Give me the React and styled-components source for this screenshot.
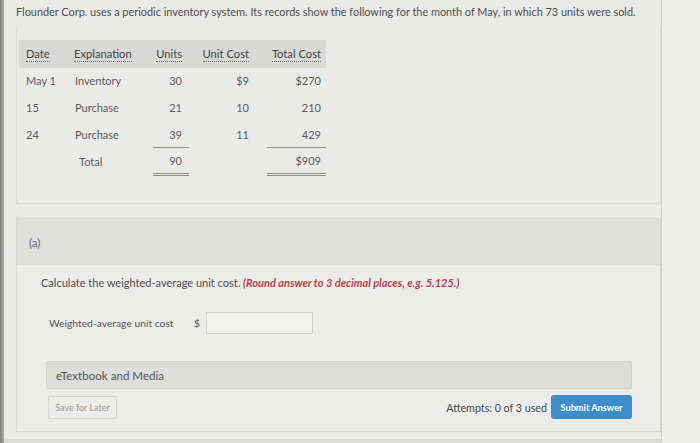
import React from 'react';
import styled, { createGlobalStyle } from 'styled-components';

const GlobalStyle = createGlobalStyle`
	html, body {
		margin: 0;
		padding: 0;
		background: #ececeb;
	}
	body {
		font-family: Lato, 'Open Sans', 'Liberation Sans', sans-serif;
		color: #555;
	}
`;

const rows = [
	{ date: 'May 1', text: 'Inventory', units: '30', cost: '$9', total: '$270' },
	{ date: '15', text: 'Purchase', units: '21', cost: '10', total: '210' },
	{ date: '24', text: 'Purchase', units: '39', cost: '11', total: '429', rule: 'single' },
	{ date: '', text: 'Total', units: '90', cost: '', total: '$909', rule: 'double', indent: true },
];

const App = () => {
	return (
		<Screen>
			<GlobalStyle />
			<Bezel />
			<Page>
				<Intro>
					Flounder Corp. uses a periodic inventory system. Its records show the following for
					the month of May, in which 73 units were sold.
				</Intro>
				<TableCard>
					<Grid>
						<Head>
							<HeadLabel>Date</HeadLabel>
						</Head>
						<Head>
							<HeadLabel>Explanation</HeadLabel>
						</Head>
						<Head $right $pad={7}>
							<HeadLabel>Units</HeadLabel>
						</Head>
						<Head $right $pad={10}>
							<HeadLabel>Unit Cost</HeadLabel>
						</Head>
						<Head $right $pad={5}>
							<HeadLabel>Total Cost</HeadLabel>
						</Head>
						{rows.map((r, i) => (
							<React.Fragment key={i}>
								<Cell $padLeft={7}>{r.date}</Cell>
								<Cell $padLeft={r.indent ? 8 : 4}>{r.text}</Cell>
								<Cell $right $pad={7} $rule={r.rule}>
									{r.units}
								</Cell>
								<Cell $right $pad={10}>
									{r.cost}
								</Cell>
								<Cell $right $pad={5} $gap={8} $rule={r.rule}>
									{r.total}
								</Cell>
							</React.Fragment>
						))}
					</Grid>
				</TableCard>
				<PartCard>
					<PartHeader>(a)</PartHeader>
					<PartBody>
						<Question>
							Calculate the weighted-average unit cost.{' '}
							<Hint>(Round answer to 3 decimal places, e.g. 5.125.)</Hint>
						</Question>
						<AnswerRow>
							<AnswerLabel>Weighted-average unit cost</AnswerLabel>
							<Dollar>$</Dollar>
							<AnswerInput type="text" />
						</AnswerRow>
						<MediaBar>eTextbook and Media</MediaBar>
						<Footer>
							<SaveButton>Save for Later</SaveButton>
							<Attempts>Attempts: 0 of 3 used</Attempts>
							<SubmitButton>Submit Answer</SubmitButton>
						</Footer>
					</PartBody>
				</PartCard>
			</Page>
			<Outside />
		</Screen>
	);
};

const Screen = styled.div`
	display: flex;
	height: 443px;
	overflow: hidden;
`;

const Bezel = styled.div`
	width: 4px;
	background: linear-gradient(90deg, #7e7e7e, #a9a9a8);
`;

const Page = styled.div`
	width: 658px;
	box-sizing: border-box;
	padding: 5px 0 0 12px;
	background: #e9e9e7;
	border-right: 1px solid #d2d2d0;
	border-bottom: 4px solid #dcdcda;
	height: 443px;
`;

const Outside = styled.div`
	flex: 1;
	background: #eeeeed;
`;

const Intro = styled.p`
	margin: 0;
	font-size: 10.9px;
	line-height: 14px;
	color: #4e4e4e;
	white-space: nowrap;
`;

const TableCard = styled.div`
	margin-top: 9px;
	padding: 12px 0 28px 2px;
	border: 1px solid #dcdcda;
	border-top: none;
	background: #eaeae8;
`;

const Grid = styled.div`
	display: grid;
	grid-template-columns: 52px 82px 36px 70px 67px;
	grid-auto-rows: 27px;
	width: 307px;
	font-size: 11px;
	color: #5a5a5a;
	& > :nth-child(-n + 5) {
		height: 28px;
	}
`;

const Head = styled.div`
	display: flex;
	align-items: center;
	justify-content: ${(p) => (p.$right ? 'flex-end' : 'flex-start')};
	padding: ${(p) => (p.$right ? `0 ${p.$pad}px 0 0` : '0 0 0 7px')};
	background: #d8d8d6;
	color: #454545;
	font-size: 11.2px;
	&:nth-child(2) {
		padding-left: 3px;
	}
`;

const HeadLabel = styled.span`
	border-bottom: 1px dotted #6a6a6a;
	line-height: 13px;
	padding-bottom: 1px;
`;

const Cell = styled.div`
	display: flex;
	align-items: center;
	justify-content: ${(p) => (p.$right ? 'flex-end' : 'flex-start')};
	padding-left: ${(p) => p.$padLeft || 0}px;
	padding-right: ${(p) => p.$pad || 0}px;
	margin-left: ${(p) => p.$gap || 0}px;
	border-bottom: ${(p) =>
		p.$rule === 'double'
			? '3px double #8d8d8b'
			: p.$rule === 'single'
				? '1px solid #8d8d8b'
				: 'none'};
	${(p) => p.$rule === 'double' && 'box-sizing: border-box; margin-bottom: -1px;'}
`;

const PartCard = styled.div`
	margin-top: 14px;
	border: 1px solid #d8d8d6;
	height: 214px;
	box-sizing: border-box;
	background: #ebebe9;
`;

const PartHeader = styled.div`
	height: 46px;
	display: flex;
	align-items: center;
	padding-left: 12px;
	background: #e0e0de;
	font-size: 11.4px;
	color: #5c6478;
`;

const PartBody = styled.div`
	padding: 11px 28px 0 24px;
`;

const Question = styled.p`
	margin: 0;
	font-size: 11px;
	line-height: 14px;
	color: #4e4e4e;
`;

const Hint = styled.span`
	color: #b5444c;
	font-weight: 700;
	font-style: italic;
`;

const AnswerRow = styled.div`
	display: flex;
	align-items: center;
	margin: 22px 0 0 8px;
	font-size: 10.3px;
	color: #555;
`;

const AnswerLabel = styled.span`
	width: 145px;
`;

const Dollar = styled.span`
	width: 12px;
`;

const AnswerInput = styled.input`
	width: 107px;
	height: 22px;
	box-sizing: border-box;
	border: 1px solid #cfcfcd;
	background: #f1f1f0;
	outline: none;
	margin: 0;
`;

const MediaBar = styled.div`
	margin: 27px 0 0 5px;
	height: 28px;
	box-sizing: border-box;
	display: flex;
	align-items: center;
	padding-left: 9px;
	background: #dddddb;
	border: 1px solid #d2d2d0;
	border-radius: 2px;
	font-size: 11.6px;
	color: #555;
`;

const Footer = styled.div`
	display: flex;
	align-items: center;
	margin: 6px 0 0 7px;
`;

const SaveButton = styled.button`
	width: 69px;
	height: 23px;
	padding: 0;
	border: 1px solid #d5d5d3;
	background: #ececea;
	border-radius: 2px;
	font-family: inherit;
	font-size: 9px;
	color: #9a9a98;
`;

const Attempts = styled.span`
	margin-left: auto;
	margin-right: 4px;
	font-size: 10.7px;
	color: #474747;
`;

const SubmitButton = styled.button`
	width: 81px;
	height: 24px;
	padding: 0;
	border: none;
	border-radius: 3px;
	background: #3c8dcb;
	color: #fff;
	font-family: inherit;
	font-size: 9.2px;
	font-weight: 700;
`;

export default App;
